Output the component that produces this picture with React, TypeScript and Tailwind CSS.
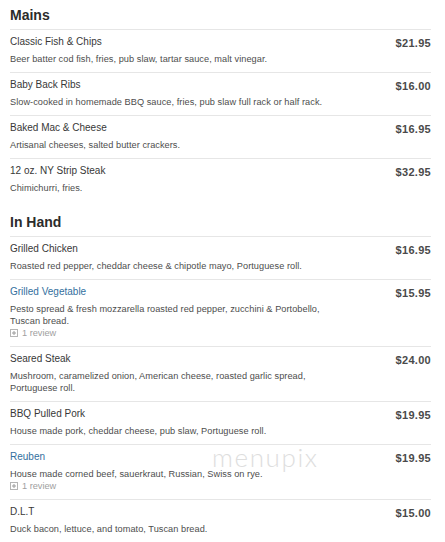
import React from 'react'

type Item = {
  name: string
  price: string
  desc: string
  link?: boolean
  reviews?: number
}

const SECTIONS: { title: string; items: Item[] }[] = [
  {
    title: 'Mains',
    items: [
      { name: 'Classic Fish & Chips', price: '$21.95', desc: 'Beer batter cod fish, fries, pub slaw, tartar sauce, malt vinegar.' },
      { name: 'Baby Back Ribs', price: '$16.00', desc: 'Slow-cooked in homemade BBQ sauce, fries, pub slaw full rack or half rack.' },
      { name: 'Baked Mac & Cheese', price: '$16.95', desc: 'Artisanal cheeses, salted butter crackers.' },
      { name: '12 oz. NY Strip Steak', price: '$32.95', desc: 'Chimichurri, fries.' },
    ],
  },
  {
    title: 'In Hand',
    items: [
      { name: 'Grilled Chicken', price: '$16.95', desc: 'Roasted red pepper, cheddar cheese & chipotle mayo, Portuguese roll.' },
      { name: 'Grilled Vegetable', price: '$15.95', desc: 'Pesto spread & fresh mozzarella roasted red pepper, zucchini & Portobello, Tuscan bread.', link: true, reviews: 1 },
      { name: 'Seared Steak', price: '$24.00', desc: 'Mushroom, caramelized onion, American cheese, roasted garlic spread, Portuguese roll.' },
      { name: 'BBQ Pulled Pork', price: '$19.95', desc: 'House made pork, cheddar cheese, pub slaw, Portuguese roll.' },
      { name: 'Reuben', price: '$19.95', desc: 'House made corned beef, sauerkraut, Russian, Swiss on rye.', link: true, reviews: 1 },
      { name: 'D.L.T', price: '$15.00', desc: 'Duck bacon, lettuce, and tomato, Tuscan bread.' },
    ],
  },
]

function ReviewIcon() {
  return (
    <svg width="8" height="8" viewBox="0 0 8 8" className="shrink-0">
      <rect x="0.5" y="0.5" width="7" height="7" fill="#fff" stroke="#b5b5b5" />
      <path d="M4 2v4M2 4h4" stroke="#9a9a9a" strokeWidth="1" />
    </svg>
  )
}

function MenuItem({ item }: { item: Item }) {
  return (
    <div className="border-t border-[#e6e6e6] pt-[6px] pb-[7px] flex justify-between">
      <div className="w-[330px]">
        <div className={`text-[10px] leading-[12px] ${item.link ? 'text-[#33709e]' : 'text-[#383838]'}`}>
          {item.name}
        </div>
        <p className="mt-[5px] text-[9.2px] leading-[12px] tracking-[0.05px] text-[#4d4d4d]">{item.desc}</p>
        {item.reviews && (
          <div className="flex items-center gap-[4px] h-[12px] text-[9.2px] leading-[12px] text-[#a0a0a0]">
            <ReviewIcon />
            <span>{item.reviews} review</span>
          </div>
        )}
      </div>
      <div className="pt-[1px] text-[11px] leading-[12px] font-bold tracking-[0.3px] text-[#4a4a4a]">{item.price}</div>
    </div>
  )
}

export default function App() {
  return (
    <div className="relative w-[445px] h-[542px] overflow-hidden bg-white pl-[10px] pr-[14px] font-['Liberation_Sans',Arial,sans-serif]">
      {SECTIONS.map((s, i) => (
        <section key={s.title} className={i > 0 ? 'mt-[6px]' : ''}>
          <h2 className="pt-[7px] pb-[6px] text-[14px] leading-[16px] font-bold text-[#2b2b2b]">{s.title}</h2>
          {s.items.map(item => <MenuItem key={item.name} item={item} />)}
          {i === SECTIONS.length - 1 && <div className="border-t border-[#e6e6e6]" />}
        </section>
      ))}

      {/* watermark */}
      <div className="absolute left-[212px] top-[444px] text-[26px] leading-none tracking-[1.6px] font-light text-[#dedede] font-['Lato',sans-serif] pointer-events-none">
        menupix
      </div>
    </div>
  )
}
